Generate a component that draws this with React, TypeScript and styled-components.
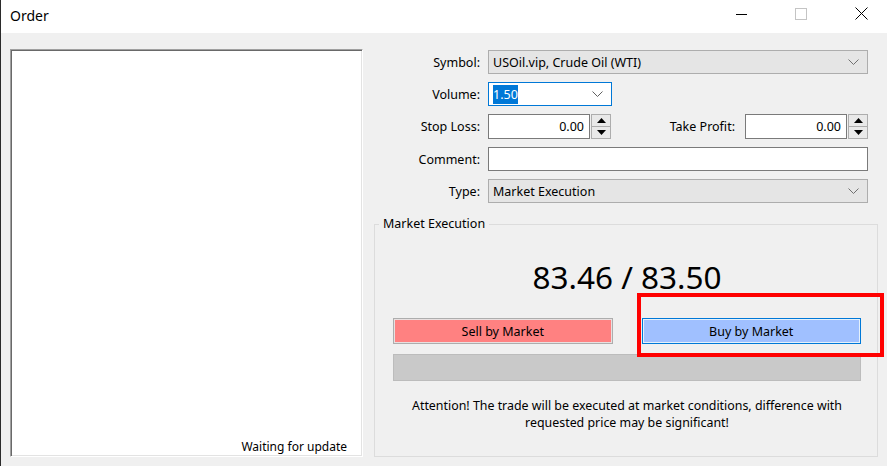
import React from "react";
import styled, { createGlobalStyle } from "styled-components";

const Global = createGlobalStyle`
  html, body { margin: 0; padding: 0; background: #f0f0f0; }
  body { font-family: "Noto Sans", "Open Sans", Arial, sans-serif; color: #000; }
  * { box-sizing: border-box; }
`;

const UI_FONT = `"Noto Sans", "Open Sans", Arial, sans-serif`;

const Window = styled.div`
  position: relative;
  width: 887px;
  height: 466px;
  overflow: hidden;
  display: flex;
  flex-direction: column;
  border-left: 1px solid #2b2b2b;
  background: #f0f0f0;
  font-family: ${UI_FONT};
`;

const TitleBar = styled.div`
  height: 33px;
  flex: none;
  display: flex;
  align-items: center;
  background: #fff;
  padding-left: 9px;
`;

const Title = styled.div`
  flex: 1;
  font-size: 14px;
  color: #000;
  padding-bottom: 3px;
`;

const Caption = styled.div`
  display: flex;
  height: 100%;
  margin-right: -4px;
`;

const CaptionButton = styled.div`
  width: 60px;
  height: 100%;
  display: flex;
  align-items: center;
  justify-content: center;
  padding-bottom: 6px;
`;

const Body = styled.div`
  flex: 1;
  display: flex;
  padding: 16px 0 9px 9px;
  gap: 11px;
`;

const ChartPanel = styled.div`
  width: 353px;
  flex: none;
  display: flex;
  align-items: flex-end;
  justify-content: flex-end;
  background: #fff;
  border: 1px solid;
  border-color: #a0a0a0 #fff #fff #a0a0a0;
  box-shadow: inset 1px 1px 0 #696969, inset -1px -1px 0 #e3e3e3;
  padding: 0 15px 1px 0;
  font-size: 12px;
`;

const RightColumn = styled.div`
  width: 504px;
  flex: none;
  display: flex;
  flex-direction: column;
  padding-top: 1px;
`;

const Form = styled.div`
  display: grid;
  grid-template-columns: 106px 380px;
  column-gap: 8px;
  row-gap: 8px;
  align-items: center;
`;

const Label = styled.label`
  font-size: 12.5px;
  text-align: right;
  white-space: nowrap;
`;

const Combo = styled.div<{ $variant: "readonly" | "focused" }>`
  height: 24px;
  display: flex;
  align-items: center;
  padding: 0 8px 0 4px;
  font-size: 12.5px;
  border: 1px solid ${(p) => (p.$variant === "focused" ? "#0078d7" : "#adadad")};
  background: ${(p) => (p.$variant === "focused" ? "#fff" : "#e5e5e5")};
  width: ${(p) => (p.$variant === "focused" ? "124px" : "100%")};
`;

const ComboText = styled.span`
  flex: 1;
  white-space: nowrap;
`;

const Selected = styled.span`
  background: #0078d7;
  color: #fff;
  padding: 1px 0;
`;

const TextBox = styled.div`
  height: 24px;
  background: #fff;
  border: 1px solid #7a7a7a;
`;

const LevelsRow = styled.div`
  display: flex;
  align-items: center;
  height: 25px;
`;

const InlineLabel = styled.label`
  flex: 1;
  text-align: right;
  padding-right: 10px;
  font-size: 12.5px;
  white-space: nowrap;
`;

const NumberField = styled.div`
  display: flex;
  height: 25px;
  width: 123px;
  flex: none;
`;

const NumberInput = styled.div`
  flex: 1;
  display: flex;
  align-items: center;
  justify-content: flex-end;
  padding-right: 5px;
  background: #fff;
  border: 1px solid #7a7a7a;
  font-size: 12.5px;
`;

const Spinner = styled.div`
  width: 20px;
  display: flex;
  flex-direction: column;
  border: 1px solid #adadad;
  background: #e1e1e1;
  margin-left: 1px;
`;

const SpinHalf = styled.div<{ $top?: boolean }>`
  flex: 1;
  display: flex;
  align-items: center;
  justify-content: center;
  border-bottom: ${(p) => (p.$top ? "1px solid #adadad" : "none")};
  background: #e9e9e9;
`;

const GroupBox = styled.fieldset`
  flex: 1;
  margin: 13px 0 0 0;
  padding: 0;
  border: 1px solid #dcdcdc;
  display: flex;
  flex-direction: column;
  min-width: 0;
`;

const Legend = styled.legend`
  font-size: 12.5px;
  line-height: 16px;
  padding: 0 4px;
  margin-left: 4px;
`;

const GroupContent = styled.div`
  flex: 1;
  display: flex;
  flex-direction: column;
  padding: 0 16px 0 18px;
`;

const Price = styled.div`
  margin-top: 25px;
  font-size: 31.5px;
  line-height: 40px;
  text-align: center;
`;

const Actions = styled.div`
  display: grid;
  grid-template-columns: 1fr 1fr;
  column-gap: 29px;
  margin-top: 21px;
`;

const TradeButton = styled.div<{ $side: "sell" | "buy" }>`
  height: 26px;
  display: flex;
  align-items: center;
  justify-content: center;
  font-size: 12.5px;
  border: 1px solid ${(p) => (p.$side === "sell" ? "#adadad" : "#0078d7")};
  background: ${(p) => (p.$side === "sell" ? "#ff8181" : "#a0c0ff")};
  box-shadow: inset 0 0 0 1px
    ${(p) => (p.$side === "sell" ? "#e8e0e0" : "#e5f1fb")};
`;

const StatusBar = styled.div`
  height: 27px;
  margin-top: 10px;
  background: #c9c9c9;
  border: 1px solid #bcbcbc;
`;

const Notice = styled.div`
  margin-top: 16px;
  font-size: 12.4px;
  line-height: 17px;
  text-align: center;
`;

const Highlight = styled.div`
  position: absolute;
  left: 636px;
  top: 293px;
  width: 247px;
  height: 64px;
  border: 4px solid #ff0000;
  pointer-events: none;
`;

const Chevron = ({ color = "#606060" }: { color?: string }) => (
  <svg width="11" height="6" viewBox="0 0 11 6">
    <polyline points="0.5,0.5 5.5,5.5 10.5,0.5" fill="none" stroke={color} strokeWidth="1" />
  </svg>
);

const Arrow = ({ up }: { up?: boolean }) => (
  <svg width="9" height="5" viewBox="0 0 9 5">
    {up ? <polygon points="0,5 9,5 4.5,0" fill="#000" /> : <polygon points="0,0 9,0 4.5,5" fill="#000" />}
  </svg>
);

const Spin = () => (
  <Spinner>
    <SpinHalf $top>
      <Arrow up />
    </SpinHalf>
    <SpinHalf>
      <Arrow />
    </SpinHalf>
  </Spinner>
);

const NumberBox = ({ value }: { value: string }) => (
  <NumberField>
    <NumberInput>{value}</NumberInput>
    <Spin />
  </NumberField>
);

export default function App() {
  return (
    <>
      <Global />
      <Window>
        <TitleBar>
          <Title>Order</Title>
          <Caption>
            <CaptionButton>
              <svg width="11" height="11" viewBox="0 0 11 11">
                <line x1="0" y1="6.5" x2="11" y2="6.5" stroke="#000" strokeWidth="1" />
              </svg>
            </CaptionButton>
            <CaptionButton>
              <svg width="12" height="12" viewBox="0 0 12 12">
                <rect x="0.5" y="0.5" width="11" height="11" fill="none" stroke="#c4c4c4" strokeWidth="1" />
              </svg>
            </CaptionButton>
            <CaptionButton>
              <svg width="13" height="13" viewBox="0 0 13 13">
                <path d="M0.5 0.5 L12.5 12.5 M12.5 0.5 L0.5 12.5" stroke="#000" strokeWidth="1" />
              </svg>
            </CaptionButton>
          </Caption>
        </TitleBar>
        <Body>
          <ChartPanel>Waiting for update</ChartPanel>
          <RightColumn>
            <Form>
              <Label>Symbol:</Label>
              <Combo $variant="readonly">
                <ComboText>USOil.vip, Crude Oil (WTI)</ComboText>
                <Chevron color="#707070" />
              </Combo>
              <Label>Volume:</Label>
              <Combo $variant="focused">
                <ComboText>
                  <Selected>1.50</Selected>
                </ComboText>
                <Chevron />
              </Combo>
              <Label>Stop Loss:</Label>
              <LevelsRow>
                <NumberBox value="0.00" />
                <InlineLabel>Take Profit:</InlineLabel>
                <NumberBox value="0.00" />
              </LevelsRow>
              <Label>Comment:</Label>
              <TextBox />
              <Label>Type:</Label>
              <Combo $variant="readonly">
                <ComboText>Market Execution</ComboText>
                <Chevron color="#707070" />
              </Combo>
            </Form>
            <GroupBox>
              <Legend>Market Execution</Legend>
              <GroupContent>
                <Price>83.46 / 83.50</Price>
                <Actions>
                  <TradeButton $side="sell">Sell by Market</TradeButton>
                  <TradeButton $side="buy">Buy by Market</TradeButton>
                </Actions>
                <StatusBar />
                <Notice>
                  Attention! The trade will be executed at market conditions, difference with
                  <br />
                  requested price may be significant!
                </Notice>
              </GroupContent>
            </GroupBox>
          </RightColumn>
        </Body>
        <Highlight />
      </Window>
    </>
  );
}
